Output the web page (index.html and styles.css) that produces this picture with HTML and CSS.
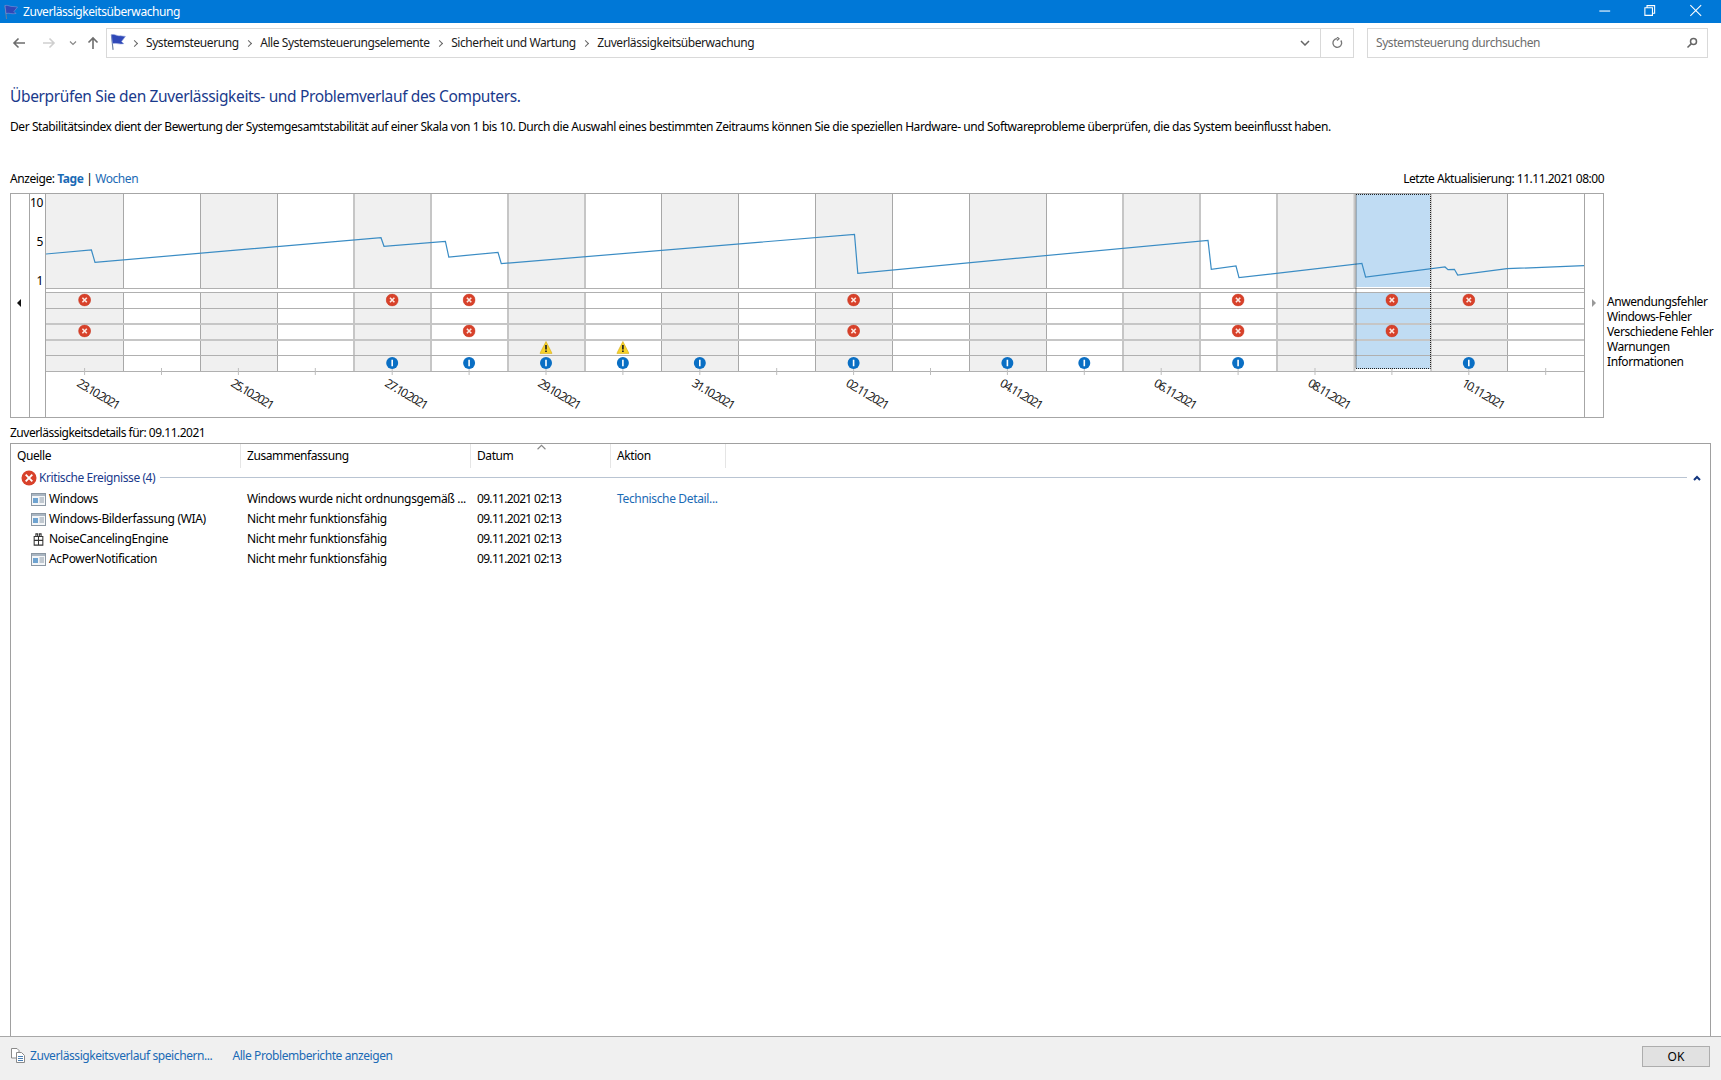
FILE: index.html
```html
<!DOCTYPE html>
<html lang="de">
<head>
<meta charset="utf-8">
<title>Zuverlässigkeitsüberwachung</title>
<link rel="stylesheet" href="styles.css">
</head>
<body>
<svg class="defs" width="0" height="0" aria-hidden="true">
  <defs>
    <symbol id="flag" viewBox="0 0 16 16">
      <path d="M3 1.5 4.5 15" class="flag-pole"/>
      <path d="M3 1.5C6 .5 8 3 11 2.5L15.5 3 12 7.5 14 9.5C10 10.5 7 8.5 4 9.5Z" class="flag-body"/>
    </symbol>
    <symbol id="app" viewBox="0 0 15 13">
      <rect x=".5" y=".5" width="14" height="12" class="app-frame"/>
      <rect x="1" y="1" width="13" height="2" class="app-bar"/>
      <rect x="2" y="5" width="5" height="5" class="app-blue"/>
      <path d="M8.5 5H13M8.5 7H13M8.5 9H13" class="app-lines"/>
    </symbol>
    <symbol id="gear" viewBox="0 0 14 15">
      <path d="M4 1h2v3H4zM8 1h2v3H8zM2 4h10v10H2zM2 8.5h10M7 4v10" class="gear"/>
    </symbol>
    <symbol id="err" viewBox="0 0 13 13">
      <circle cx="6.5" cy="6.5" r="6" class="err-disc"/>
      <path d="M4.3 4.3 8.7 8.7M8.7 4.3 4.3 8.7" class="err-x"/>
    </symbol>
    <symbol id="inf" viewBox="0 0 13 13">
      <circle cx="6.5" cy="6.5" r="6" class="inf-disc"/>
      <path d="M6.5 3.2V9.8" class="inf-i"/>
    </symbol>
    <symbol id="warn" viewBox="0 0 13 13">
      <path d="M6.5.5 12.6 12.4H.4Z" class="warn-tri"/>
      <path d="M6.5 4V8.6M6.5 9.6V11" class="warn-mark"/>
    </symbol>
  </defs>
</svg>

<header class="titlebar">
  <svg class="title-flag"><use href="#flag"/></svg>
  <span class="title-text">Zuverlässigkeitsüberwachung</span>
  <div class="win-controls">
    <svg class="win-btn" viewBox="0 0 12 12"><path d="M1 6.5H11"/></svg>
    <svg class="win-btn" viewBox="0 0 12 12"><path d="M1.5 3.5H8.5V10.5H1.5ZM3.5 3.5V1.5H10.5V8.5H8.5"/></svg>
    <svg class="win-btn" viewBox="0 0 12 12"><path d="M1 1 11 11M11 1 1 11"/></svg>
  </div>
</header>

<nav class="navbar">
  <div class="nav-buttons">
    <svg class="nav-ico nav-back" viewBox="0 0 14 14"><path d="M13 7H2M6.5 2.5 2 7l4.5 4.5"/></svg>
    <svg class="nav-ico nav-fwd" viewBox="0 0 14 14"><path d="M1 7H12M7.5 2.5 12 7l-4.5 4.5"/></svg>
    <svg class="nav-ico nav-drop" viewBox="0 0 8 8"><path d="M1 2.5 4 5.5 7 2.5"/></svg>
    <svg class="nav-ico nav-up" viewBox="0 0 14 14"><path d="M7 13V2M2.5 6.5 7 2l4.5 4.5"/></svg>
  </div>
  <div class="addressbar">
    <svg class="addr-flag"><use href="#flag"/></svg>
    <ol class="crumbs">
      <li class="crumb-sep"></li>
      <li class="crumb c1">Systemsteuerung</li>
      <li class="crumb-sep"></li>
      <li class="crumb c2">Alle Systemsteuerungselemente</li>
      <li class="crumb-sep"></li>
      <li class="crumb c3">Sicherheit und Wartung</li>
      <li class="crumb-sep"></li>
      <li class="crumb c4">Zuverlässigkeitsüberwachung</li>
    </ol>
    <svg class="addr-drop" viewBox="0 0 10 6"><path d="M1 1 5 5 9 1"/></svg>
    <div class="addr-refresh">
      <svg viewBox="0 0 12 12"><path d="M9.8 3.5A4.3 4.3 0 1 1 6 1.7M6 0 8 1.8 6 3.6"/></svg>
    </div>
  </div>
  <div class="searchbox">
    <span>Systemsteuerung durchsuchen</span>
    <svg viewBox="0 0 12 12"><circle cx="7.5" cy="4.5" r="3"/><path d="M5.4 6.6 1.5 10.5"/></svg>
  </div>
</nav>

<main class="content">
  <h1 class="heading">Überprüfen Sie den Zuverlässigkeits- und Problemverlauf des Computers.</h1>
  <p class="intro">Der Stabilitätsindex dient der Bewertung der Systemgesamtstabilität auf einer Skala von 1 bis 10. Durch die Auswahl eines bestimmten Zeitraums können Sie die speziellen Hardware- und Softwareprobleme überprüfen, die das System beeinflusst haben.</p>

  <div class="viewrow">
    <span class="viewmode">Anzeige: <a class="link strong">Tage</a> | <a class="link">Wochen</a></span>
    <span class="updated">Letzte Aktualisierung: 11.11.2021 08:00</span>
  </div>

  <section class="chartrow">
    <div class="chartbox">
      <div class="scroll scroll-left"><i class="tri-left"></i></div>
      <div class="yaxis"><span class="y10">10</span><span class="y5">5</span><span class="y1">1</span></div>
      <svg class="plot" viewBox="46 194 1538 223" width="1538" height="223">
        <path class="col-grey" d="M46 194H123.6V288H46ZM200.5 194H277.4V288H200.5ZM354.3 194H431.2V288H354.3ZM508.1 194H585V288H508.1ZM661.9 194H738.8V288H661.9ZM815.7 194H892.6V288H815.7ZM969.5 194H1046.4V288H969.5ZM1123.3 194H1200.2V288H1123.3ZM1277.1 194H1354V288H1277.1ZM1430.9 194H1507.8V288H1430.9Z"/>
        <path class="col-grey" d="M46 292H123.6V371H46ZM200.5 292H277.4V371H200.5ZM354.3 292H431.2V371H354.3ZM508.1 292H585V371H508.1ZM661.9 292H738.8V371H661.9ZM815.7 292H892.6V371H815.7ZM969.5 292H1046.4V371H969.5ZM1123.3 292H1200.2V371H1123.3ZM1277.1 292H1354V371H1277.1ZM1430.9 292H1507.8V371H1430.9Z"/>
        <path class="col-sel" d="M1356 194H1430V287H1356ZM1356 293H1430V369H1356Z"/>
        <path class="grid-thin" d="M123.5 194V288M123.5 292V371M200.5 194V288M200.5 292V371M277.5 194V288M277.5 292V371M661.5 194V288M661.5 292V371M738.5 194V288M738.5 292V371M815.5 194V288M815.5 292V371M892.5 194V288M892.5 292V371M969.5 194V288M969.5 292V371M1046.5 194V288M1046.5 292V371M1507.5 194V288M1507.5 292V371"/>
        <path class="grid-thick" d="M354 194V288M354 292V371M431 194V288M431 292V371M508 194V288M508 292V371M585 194V288M585 292V371M1123 194V288M1123 292V371M1200 194V288M1200 292V371M1277 194V288M1277 292V371M1354.5 194V288M1354.5 292V371"/>
        <path class="grid-thin" d="M1431 194V288M1431 292V371"/>
        <path class="grid-h" d="M46 288.5H1584M46 292.5H1584M46 308.5H1584M46 355.5H1584M46 371.5H1584"/>
        <path class="grid-thick" d="M46 324H1584M46 340H1584"/>
        <path class="ticks" d="M84.6 368V375M161.5 368V375M238.4 368V375M315.3 368V375M392.2 368V375M469.1 368V375M546 368V375M622.9 368V375M699.8 368V375M776.7 368V375M853.6 368V375M930.5 368V375M1007.4 368V375M1084.3 368V375M1161.2 368V375M1238.1 368V375M1315 368V375M1391.9 368V375M1468.8 368V375M1545.7 368V375"/>
        <polyline class="trend" points="46,254 91.4,250 95,262.3 381,237.7 384,246.3 445.4,241.3 448.8,257 498,252.3 501.3,263.7 854.5,234.3 857.8,273.3 1208,240.3 1211.3,269.3 1236,266 1239,277.7 1361.9,263.3 1365.6,277 1445,267 1448,269.7 1454.4,269.3 1457.7,275 1507,268.7 1584,265.7"/>
        <path class="sel-focus" d="M1356 194.5H1430.5V368.5H1356Z"/>

        <use href="#err" x="78.1" y="293.5" width="13" height="13"/>
        <use href="#err" x="385.7" y="293.5" width="13" height="13"/>
        <use href="#err" x="462.6" y="293.5" width="13" height="13"/>
        <use href="#err" x="847.1" y="293.5" width="13" height="13"/>
        <use href="#err" x="1231.6" y="293.5" width="13" height="13"/>
        <use href="#err" x="1385.4" y="293.5" width="13" height="13"/>
        <use href="#err" x="1462.3" y="293.5" width="13" height="13"/>

        <use href="#err" x="78.1" y="324.5" width="13" height="13"/>
        <use href="#err" x="462.6" y="324.5" width="13" height="13"/>
        <use href="#err" x="847.1" y="324.5" width="13" height="13"/>
        <use href="#err" x="1231.6" y="324.5" width="13" height="13"/>
        <use href="#err" x="1385.4" y="324.5" width="13" height="13"/>

        <use href="#warn" x="539.5" y="341" width="13" height="13"/>
        <use href="#warn" x="616.4" y="341" width="13" height="13"/>

        <use href="#inf" x="385.7" y="356.5" width="13" height="13"/>
        <use href="#inf" x="462.6" y="356.5" width="13" height="13"/>
        <use href="#inf" x="539.5" y="356.5" width="13" height="13"/>
        <use href="#inf" x="616.4" y="356.5" width="13" height="13"/>
        <use href="#inf" x="693.3" y="356.5" width="13" height="13"/>
        <use href="#inf" x="847.1" y="356.5" width="13" height="13"/>
        <use href="#inf" x="1000.9" y="356.5" width="13" height="13"/>
        <use href="#inf" x="1077.8" y="356.5" width="13" height="13"/>
        <use href="#inf" x="1231.6" y="356.5" width="13" height="13"/>
        <use href="#inf" x="1462.3" y="356.5" width="13" height="13"/>

        <text class="date" transform="translate(76 385.5) rotate(31)">23.10.2021</text>
        <text class="date" transform="translate(230 385.5) rotate(31)">25.10.2021</text>
        <text class="date" transform="translate(384 385.5) rotate(31)">27.10.2021</text>
        <text class="date" transform="translate(537 385.5) rotate(31)">29.10.2021</text>
        <text class="date" transform="translate(691 385.5) rotate(31)">31.10.2021</text>
        <text class="date" transform="translate(845 385.5) rotate(31)">02.11.2021</text>
        <text class="date" transform="translate(999 385.5) rotate(31)">04.11.2021</text>
        <text class="date" transform="translate(1153 385.5) rotate(31)">06.11.2021</text>
        <text class="date" transform="translate(1307 385.5) rotate(31)">08.11.2021</text>
        <text class="date" transform="translate(1461 385.5) rotate(31)">10.11.2021</text>
      </svg>
      <div class="scroll scroll-right"><i class="tri-right"></i></div>
    </div>
    <ul class="legend">
      <li>Anwendungsfehler</li>
      <li>Windows-Fehler</li>
      <li>Verschiedene Fehler</li>
      <li>Warnungen</li>
      <li>Informationen</li>
    </ul>
  </section>

  <div class="details-label">Zuverlässigkeitsdetails für: 09.11.2021</div>

  <section class="listbox">
    <div class="list-head">
      <div class="th">Quelle</div>
      <div class="th">Zusammenfassung</div>
      <div class="th">Datum</div>
      <div class="th">Aktion</div>
      <svg class="sort-caret" viewBox="0 0 8 5"><path d="M.5 4.5 4 1l3.5 3.5"/></svg>
    </div>
    <div class="group">
      <svg class="group-ico" viewBox="0 0 17 17"><circle cx="8.5" cy="8.5" r="8"/><path d="M5 5 12 12M12 5 5 12"/></svg>
      <span class="group-text">Kritische Ereignisse (4)</span>
      <span class="group-line"></span>
      <svg class="group-chev" viewBox="0 0 8 6"><path d="M1 5 4 2 7 5"/></svg>
    </div>
    <div class="row">
      <div class="td src"><svg class="row-ico"><use href="#app"/></svg>Windows</div>
      <div class="td">Windows wurde nicht ordnungsgemäß ...</div>
      <div class="td when">09.11.2021 02:13</div>
      <div class="td"><a class="link">Technische Detail...</a></div>
    </div>
    <div class="row">
      <div class="td src"><svg class="row-ico"><use href="#app"/></svg>Windows-Bilderfassung (WIA)</div>
      <div class="td">Nicht mehr funktionsfähig</div>
      <div class="td when">09.11.2021 02:13</div>
      <div class="td"></div>
    </div>
    <div class="row">
      <div class="td src"><svg class="row-ico"><use href="#gear"/></svg>NoiseCancelingEngine</div>
      <div class="td">Nicht mehr funktionsfähig</div>
      <div class="td when">09.11.2021 02:13</div>
      <div class="td"></div>
    </div>
    <div class="row">
      <div class="td src"><svg class="row-ico"><use href="#app"/></svg>AcPowerNotification</div>
      <div class="td">Nicht mehr funktionsfähig</div>
      <div class="td when">09.11.2021 02:13</div>
      <div class="td"></div>
    </div>
  </section>
</main>

<footer class="footer">
  <svg class="foot-ico" viewBox="0 0 14 15"><path d="M.5.5H6L8 2.5V10H.5Z"/><path d="M5.5 4.5H10.5L13.5 7.5V14.5H5.5Z" class="foot-front"/><path d="M7 8.5H12M7 10.5H12M7 12.5H12" class="foot-lines"/></svg>
  <a class="link foot-save">Zuverlässigkeitsverlauf speichern...</a>
  <a class="link foot-all">Alle Problemberichte anzeigen</a>
  <button class="ok">OK</button>
</footer>
</body>
</html>
```
FILE: styles.css
```css
* { box-sizing: border-box; }
html, body { margin: 0; padding: 0; }
body {
  width: 1721px;
  height: 1080px;
  overflow: hidden;
  display: flex;
  flex-direction: column;
  background: #fff;
  color: #000;
  font: 12px/16px "Noto Sans", sans-serif;
  letter-spacing: -0.42px;
}
.defs { position: absolute; }

/* icon symbols */
.flag-pole { fill: none; stroke: #6a7f9e; stroke-width: 1; }
.flag-body { fill: #2f48b8; stroke: #8fa0dc; stroke-width: .5; }
.app-frame { fill: #f4f6f8; stroke: #8b97a3; }
.app-bar { fill: #a9b5c1; }
.app-blue { fill: #6fa3d0; }
.app-lines { stroke: #8c9aa8; fill: none; }
.gear { fill: #fff; stroke: #333; stroke-width: 1.2; }
.err-disc { fill: #d8412a; stroke: #c9361f; stroke-width: .6; }
.err-x { stroke: #fde8e2; stroke-width: 1.6; fill: none; }
.inf-disc { fill: #0a6fc4; }
.inf-i { stroke: #fff; stroke-width: 1.6; fill: none; }
.warn-tri { fill: #f7d32a; stroke: #d5aa10; stroke-width: .6; }
.warn-mark { stroke: #222; stroke-width: 1.7; fill: none; }

/* title bar */
.titlebar {
  flex: none;
  height: 23px;
  background: #0078d7;
  color: #fff;
  display: flex;
  align-items: center;
  padding-left: 2px;
}
.title-flag { width: 16px; height: 16px; margin-right: 5px; }
.win-controls { margin-left: auto; margin-right: 3px; padding-bottom: 2px; display: flex; }
.win-btn { width: 45.5px; height: 13px; fill: none; stroke: #fff; stroke-width: 1; }

/* navigation */
.navbar {
  flex: none;
  height: 39px;
  padding: 5px 13px 4px 0;
  display: flex;
}
.nav-buttons { width: 106px; display: flex; align-items: center; }
.nav-ico { fill: none; stroke-width: 1.6; }
.nav-back { width: 14px; height: 14px; margin-left: 12px; stroke: #6d6d6d; }
.nav-fwd { width: 14px; height: 14px; margin-left: 16px; stroke: #cfcfcf; }
.nav-drop { width: 8px; height: 8px; margin-left: 13px; stroke: #888; stroke-width: 1.2; }
.nav-up { width: 14px; height: 14px; margin-left: 9px; stroke: #6d6d6d; }
.addressbar {
  width: 1248px;
  border: 1px solid #d9d9d9;
  display: flex;
  align-items: center;
  padding-left: 1px;
}
.addr-flag { width: 18px; height: 18px; flex: none; margin-bottom: 3px; }
.crumbs { list-style: none; margin: 0; padding: 0; display: flex; align-items: center; }
.crumb-sep {
  width: 5px; height: 5px; margin-left: 7.5px;
  border-top: 1px solid #666; border-right: 1px solid #666;
  transform: rotate(45deg);
}
.crumb-sep:first-child { margin-left: 6px; }
.crumb { margin-left: 9px; color: #1a1a1a; }
.addr-drop { width: 10px; height: 6px; margin-left: auto; margin-right: 10px; fill: none; stroke: #666; stroke-width: 1.5; }
.addr-refresh {
  width: 33px; align-self: stretch;
  border-left: 1px solid #d9d9d9;
  display: flex; align-items: center; justify-content: center;
}
.addr-refresh svg { width: 12px; height: 12px; fill: none; stroke: #777; stroke-width: 1.3; }
.searchbox {
  width: 341px;
  margin-left: 13px;
  border: 1px solid #d9d9d9;
  display: flex;
  align-items: center;
  justify-content: space-between;
  padding: 0 9px 0 8px;
  color: #6d6d6d;
}
.searchbox svg { width: 12px; height: 12px; fill: none; stroke: #666; stroke-width: 1.5; }

/* content */
.content {
  flex: 1;
  min-height: 0;
  display: flex;
  flex-direction: column;
  padding: 24px 10px 0;
}
.heading {
  margin: 0;
  font: 400 15.5px/20px "Noto Sans", sans-serif;
  letter-spacing: -0.36px;
  color: #1a3a8c;
}
.intro { margin: 13px 0 0; white-space: nowrap; }
.viewrow {
  margin-top: 36px;
  width: 1594px;
  display: flex;
  justify-content: space-between;
}
.updated { letter-spacing: -0.5px; }
.link { color: #1a6ab5; }
.strong { font-weight: 700; }

/* chart */
.chartrow { margin-top: 6px; display: flex; height: 225px; }
.chartbox {
  width: 1594px;
  border: 1px solid #a6a6a6;
  display: flex;
}
.scroll { display: flex; align-items: flex-start; justify-content: center; height: 100%; }
.scroll-left { width: 19px; border-right: 1px solid #a6a6a6; padding-top: 105px; padding-right: 2px; }
.scroll-right { width: 19px; border-left: 1px solid #a6a6a6; padding-top: 105px; }
.tri-left { border: 4px solid transparent; border-left: 0; border-right: 4px solid #111; }
.tri-right { border: 4px solid transparent; border-right: 0; border-left: 4px solid #999; }
.yaxis {
  width: 16px;
  border-right: 1px solid #a6a6a6;
  display: flex;
  flex-direction: column;
  align-items: flex-end;
  padding: 1px 2px 0 0;
}
.y5 { margin-top: 23px; }
.y1 { margin-top: 23px; }
.plot { flex: none; display: block; }
.col-grey { fill: #f0f0f0; }
.col-sel { fill: #c0dcf3; }
.grid-thin { stroke: #a8a8a8; stroke-width: 1; fill: none; }
.grid-thick { stroke: #c6c6c6; stroke-width: 2; fill: none; }
.grid-h { stroke: #b0b0b0; stroke-width: 1; fill: none; }
.ticks { stroke: #bdbdbd; stroke-width: 1; fill: none; }
.trend { fill: none; stroke: #3a8cc4; stroke-width: 1.2; }
.sel-focus { fill: none; stroke: #222; stroke-width: 1; stroke-dasharray: 1 1; }
.date { font: 12px "Noto Sans", sans-serif; letter-spacing: -1.5px; fill: #1a1a1a; }
.legend {
  list-style: none;
  margin: 0;
  padding: 101px 0 0 3px;
  line-height: 15px;
  white-space: nowrap;
}

/* details */
.details-label { margin-top: 7px; letter-spacing: -0.5px; }
.listbox {
  flex: 1;
  min-height: 0;
  margin: 2px 0 0;
  width: 1701px;
  border: 1px solid #a0a0a0;
  border-bottom: 0;
  position: relative;
}
.list-head, .row {
  display: grid;
  grid-template-columns: 230px 230px 140px 115px;
}
.list-head { height: 24px; }
.th {
  padding: 4px 0 0 6px;
  border-right: 1px solid #e5e5e5;
  line-height: 16px;
}
.sort-caret {
  position: absolute;
  left: 526px; top: 0;
  width: 9px; height: 6px;
  fill: none; stroke: #888; stroke-width: 1;
}
.group { height: 19px; margin-bottom: 2px; display: flex; align-items: center; padding-left: 10px; }
.group-ico { width: 16px; height: 16px; flex: none; }
.group-ico circle { fill: #d8412a; }
.group-ico path { stroke: #fff; stroke-width: 2; fill: none; }
.group-text { margin-left: 2px; color: #1a3a8c; white-space: nowrap; }
.group-line { flex: 1; height: 1px; background: #b9c4d2; margin: 0 6px 0 5px; }
.group-chev { width: 8px; height: 6px; margin-right: 9px; fill: none; stroke: #12357e; stroke-width: 2; }
.row { height: 20px; line-height: 20px; }
.td { padding-left: 6px; white-space: nowrap; letter-spacing: -0.34px; }
.td.when { letter-spacing: -0.68px; }
.td.src { padding-left: 20px; display: flex; align-items: center; }
.row-ico { width: 15px; height: 13px; margin-right: 3px; flex: none; }

/* footer */
.footer {
  flex: none;
  height: 44px;
  background: #f0f0f0;
  border-top: 1px solid #a8a8a8;
  display: flex;
  align-items: center;
  padding: 0 11px 6px;
  position: relative;
}
.foot-ico { width: 14px; height: 15px; fill: #fff; stroke: #8a8a8a; flex: none; }
.foot-front { fill: #fff; }
.foot-lines { stroke: #4a7fb5; fill: none; }
.foot-save { margin-left: 5px; }
.foot-all { margin-left: 20px; }
.ok {
  margin-left: auto;
  margin-bottom: -2px;
  width: 68px;
  height: 21px;
  padding: 0;
  background: #e1e1e1;
  border: 1px solid #adadad;
  font: inherit;
  color: #000;
}
```
